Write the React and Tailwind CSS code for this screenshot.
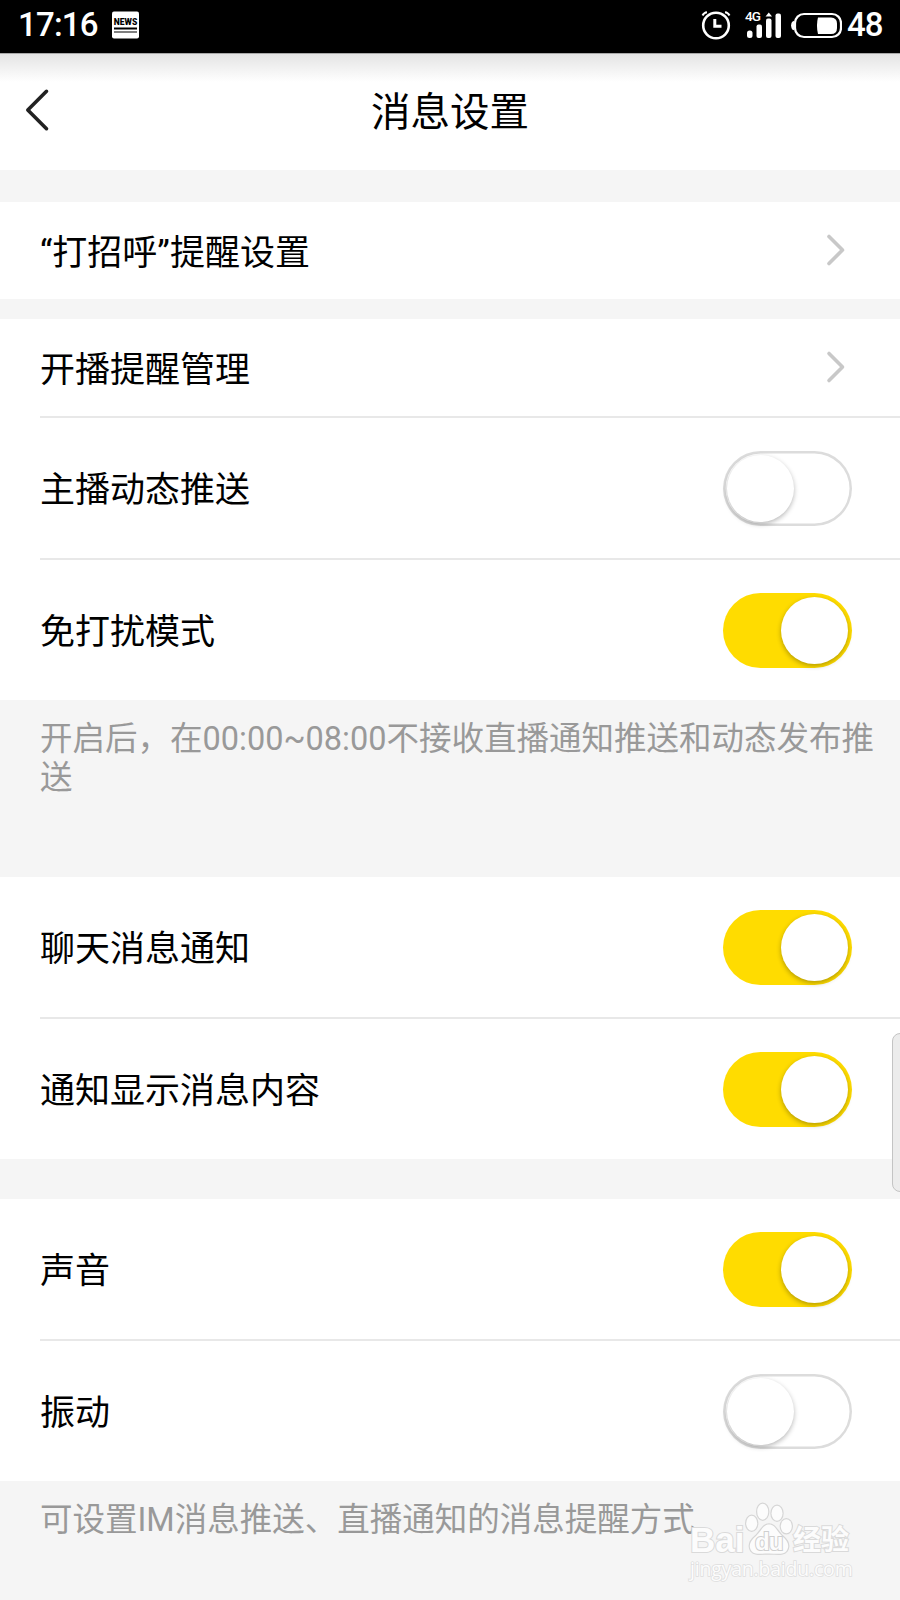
import clsx from 'clsx';
import { useState } from 'react';

function StatusBar() {
  return (
    <div className="flex h-[53px] shrink-0 items-center justify-between bg-black pl-[18px] pr-[17px] text-white">
      <div className="flex items-center">
        <span className="w-[80px] -translate-y-[2px] whitespace-nowrap text-[33px] leading-none font-medium tracking-[-0.8px]">17:16</span>
        <div className="ml-[14px] flex h-[27px] w-[27px] -translate-y-[1.5px] flex-col items-center rounded-[2px] bg-white pt-[6px] text-black">
          <span className="text-[8.5px] leading-[8px] font-black">NEWS</span>
          <span className="mt-[2px] h-[1.5px] w-[23px] bg-black" />
          <span className="mt-[2px] h-[1.5px] w-[23px] bg-black" />
        </div>
      </div>
      <div className="flex -translate-y-[2px] items-center">
        <svg width="30" height="30" viewBox="0 0 30 30" fill="none" stroke="white" strokeWidth="2.6">
          <circle cx="15" cy="15.5" r="12.8" />
          <path d="M13.8 9V16.3H20.5" strokeWidth="3" />
          <path d="M1.5 5.5Q3 2.5 6 2.2M24 2.2Q27 2.5 28.5 5.5" strokeWidth="2" />
        </svg>
        <div className="relative ml-[14px] h-[30px] w-[36px]">
          <span className="absolute -top-px left-0 text-[13.5px] leading-[15px] font-medium tracking-[-0.8px]">4G</span>
          <svg className="h-full w-[37px]" viewBox="0 0 37 30" fill="white">
            <rect x="2" y="20.5" width="5.5" height="7.5" rx="2.5" />
            <rect x="11.5" y="14.5" width="5.5" height="13.5" rx="2" />
            <rect x="21" y="8.5" width="5.5" height="19.5" rx="2" />
            <path d="M20.5 6.5L23.8 2.5L27 6.5Z" />
            <rect x="30.5" y="3.5" width="5.5" height="24.5" rx="2" />
          </svg>
        </div>
        <svg className="ml-[9px]" width="52" height="30" viewBox="0 0 52 30" fill="none">
          <rect x="5" y="4" width="46" height="23" rx="9" stroke="white" strokeWidth="2.2" />
          <path d="M4.5 10.5Q1.5 11.5 1.5 13L1 15.5L1.5 18Q1.5 19.5 4.5 20.5Z" fill="white" />
          <path d="M28 7.5H41Q47 8 47 13.5V18Q47 24 41 24H28Q27 20 27 15.5Q27 11 28 7.5Z" fill="white" />
        </svg>
        <span className="ml-[5px] w-[36px] whitespace-nowrap text-[33px] leading-none font-medium tracking-[-1px]">48</span>
      </div>
    </div>
  );
}

function Header({ title }) {
  return (
    <header className="flex h-[117px] shrink-0 items-center justify-between border-t border-[#a8a8a8] bg-linear-to-b from-[#e4e4e4] to-white to-[28px]">
      <div className="w-[120px] pl-[25px]">
        <svg className="-translate-y-[2px]" width="26" height="44" viewBox="0 0 26 44" fill="none" stroke="#222" strokeWidth="3.6" strokeLinecap="round" strokeLinejoin="round">
          <path d="M21.5 3.3L2.8 22L21.5 40.7" />
        </svg>
      </div>
      <h1 className="pt-[2px] text-[39.5px] leading-none">{title}</h1>
      <div className="w-[120px]" />
    </header>
  );
}

function Toggle({ defaultOn }) {
  const [on, setOn] = useState(defaultOn);

  return (
    <button
      role="switch"
      aria-checked={on}
      onClick={() => setOn(!on)}
      className={clsx(
        'mr-[48px] flex h-[75px] w-[129px] items-center overflow-visible rounded-full',
        on ? 'justify-end bg-[#ffdc00] pr-[4px]' : 'bg-white pl-[4px] inset-ring-[2.5px] inset-ring-[#dcdcdc]'
      )}
    >
      <span
        className={clsx(
          'h-[67px] w-[67px] rounded-full bg-white',
          on
            ? 'shadow-[0_2px_5px_rgba(0,0,0,0.3)]'
            : 'shadow-[0_2px_5px_rgba(0,0,0,0.28)]'
        )}
      />
    </button>
  );
}

function Chevron() {
  return (
    <svg className="mr-[53px] -translate-y-px" width="22" height="34" viewBox="0 0 22 34" fill="none" stroke="#c8c8c8" strokeWidth="3.6" strokeLinecap="round" strokeLinejoin="round">
      <path d="M4 3.5L17.5 17L4 30.5" />
    </svg>
  );
}

function LinkRow({ label, className }) {
  return (
    <div className={clsx('ml-[40px] flex items-center justify-between', className)}>
      <span className="pt-[5px] text-[35px] leading-none">{label}</span>
      <Chevron />
    </div>
  );
}

function ToggleRow({ label, on, className }) {
  return (
    <div className={clsx('ml-[40px] flex items-center justify-between', className)}>
      <span className="pt-[5px] text-[35px] leading-none">{label}</span>
      <Toggle defaultOn={on} />
    </div>
  );
}

function Watermark() {
  return (
    <div className="absolute top-[20px] right-[47px] w-[165px] text-[#fcfcfc] [-webkit-text-stroke:2px_#dadada] [paint-order:stroke_fill]">
      <div className="flex h-[54px] items-end">
        <span className="w-[56px] pl-[2px] text-[35px] leading-[30px] font-bold font-['Liberation_Sans']">Bai</span>
        <div className="relative h-[54px] w-[49px]">
          <svg className="h-full w-full" viewBox="0 0 49 54" fill="#fcfcfc" stroke="#d6d6d6" strokeWidth="2.4">
            <ellipse cx="7.7" cy="22.3" rx="5.5" ry="7.5" />
            <ellipse cx="18.7" cy="10.7" rx="5.5" ry="8" />
            <ellipse cx="33" cy="12.3" rx="5.5" ry="7.5" />
            <ellipse cx="42.3" cy="25.3" rx="5.5" ry="7" />
            <path d="M25 23.5C31 23.5 32 29 38 35C44 40 46 45 42.5 50C39.5 54 33 52.5 25 52.5C17 52.5 10.5 54 7.5 50C4 45 6 40 12 35C18 29 19 23.5 25 23.5Z" />
          </svg>
          <span className="absolute top-[29px] left-[11px] text-[24px] leading-[24px] font-bold tracking-[-1px] font-['Liberation_Sans'] [-webkit-text-stroke:2px_#cfcfcf]">du</span>
        </div>
        <span className="text-[28px] leading-[28px] font-bold whitespace-nowrap">经验</span>
      </div>
      <div className="mt-[4px] pl-[2px] text-[19.5px] leading-[20px] tracking-[-0.2px] whitespace-nowrap font-['Open_Sans'] [-webkit-text-stroke:1.6px_#dedede]">jingyan.baidu.com</div>
    </div>
  );
}

export default function App() {
  return (
    <div className="relative flex h-[1600px] w-[900px] flex-col overflow-hidden bg-[#f5f5f5] text-black font-[Roboto,'Noto_Sans_CJK_SC',sans-serif]">
      <StatusBar />
      <Header title="消息设置" />

      <section className="mt-[32px] bg-white">
        <LinkRow label="“打招呼”提醒设置" className="h-[97px]" />
      </section>

      <section className="mt-[20px] bg-white">
        <LinkRow label="开播提醒管理" className="h-[99px] border-b-2 border-[#e8e8e8]" />
        <ToggleRow label="主播动态推送" on={false} className="h-[142px] border-b-2 border-[#e8e8e8]" />
        <ToggleRow label="免打扰模式" on className="h-[140px]" />
      </section>

      <p className="h-[177px] shrink-0 pt-[20px] pr-[20px] pl-[40px] text-[32.5px] leading-[39px] text-[#999]">
        开启后，在00:00~08:00不接收直播通知推送和动态发布推送
      </p>

      <section className="bg-white">
        <ToggleRow label="聊天消息通知" on className="h-[142px] border-b-2 border-[#e8e8e8]" />
        <ToggleRow label="通知显示消息内容" on className="h-[140px]" />
      </section>

      <section className="mt-[40px] bg-white">
        <ToggleRow label="声音" on className="h-[142px] border-b-2 border-[#e8e8e8]" />
        <ToggleRow label="振动" on={false} className="h-[140px]" />
      </section>

      <div className="relative h-[119px] shrink-0 pt-[20px] pl-[40px]">
        <p className="text-[32.5px] leading-[39px] whitespace-nowrap text-[#999]">可设置IM消息推送、直播通知的消息提醒方式</p>
        <Watermark />
      </div>

      {/* edge panel handle */}
      <div className="absolute top-[1033px] -right-[12px] h-[159px] w-[20px] rounded-[8px] border border-[#c4c4c4] bg-[#ececec]" />
    </div>
  );
}
